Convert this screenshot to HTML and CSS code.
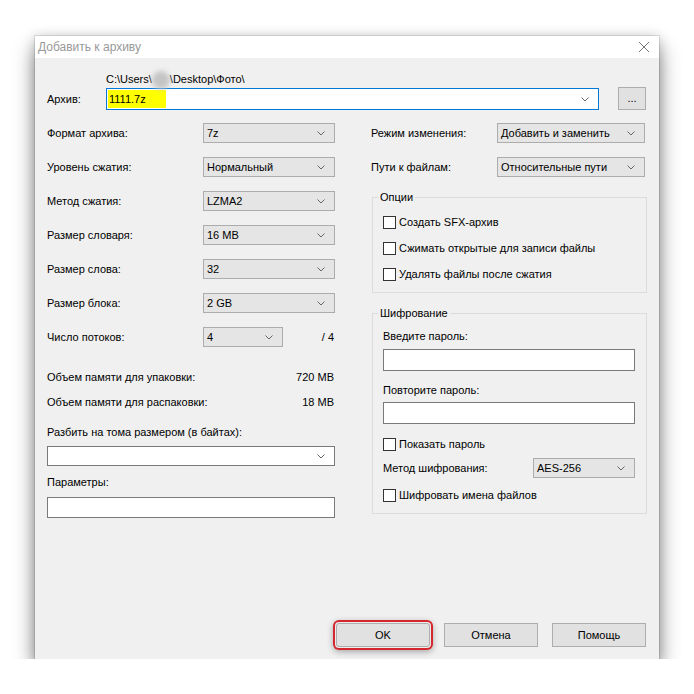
FILE: index.html
```html
<!DOCTYPE html>
<html lang="ru">
<head>
<meta charset="utf-8">
<title>Добавить к архиву</title>
<link rel="stylesheet" href="styles.css">
</head>
<body>
<div class="dialog">
  <div class="titlebar">
    <span class="title">Добавить к архиву</span>
    <svg class="close" width="12" height="12" viewBox="0 0 12 12"><path d="M1 1 L11 11 M11 1 L1 11" stroke="#777" stroke-width="1" fill="none"/></svg>
  </div>
  <div class="body">
    <div class="archive-row">
      <span class="archive-lbl">Архив:</span>
      <div class="archive-main">
        <div class="path">C:\Users\<span class="blur"></span>\Desktop\Фото\</div>
        <div class="combo white focus"><span class="hl">1111.7z</span><svg class="chev" width="8" height="5" viewBox="0 0 8 5"><path d="M0.5 0.5 L4 4 L7.5 0.5" stroke="#666" fill="none"/></svg></div>
      </div>
      <div class="btn browse">...</div>
    </div>

    <div class="columns">
      <div class="left">
        <div class="field-grid">
          <span>Формат архива:</span>
          <div class="combo"><span>7z</span><svg class="chev" width="8" height="5" viewBox="0 0 8 5"><path d="M0.5 0.5 L4 4 L7.5 0.5" stroke="#666" fill="none"/></svg></div>
          <span>Уровень сжатия:</span>
          <div class="combo"><span>Нормальный</span><svg class="chev" width="8" height="5" viewBox="0 0 8 5"><path d="M0.5 0.5 L4 4 L7.5 0.5" stroke="#666" fill="none"/></svg></div>
          <span>Метод сжатия:</span>
          <div class="combo"><span>LZMA2</span><svg class="chev" width="8" height="5" viewBox="0 0 8 5"><path d="M0.5 0.5 L4 4 L7.5 0.5" stroke="#666" fill="none"/></svg></div>
          <span>Размер словаря:</span>
          <div class="combo"><span>16 MB</span><svg class="chev" width="8" height="5" viewBox="0 0 8 5"><path d="M0.5 0.5 L4 4 L7.5 0.5" stroke="#666" fill="none"/></svg></div>
          <span>Размер слова:</span>
          <div class="combo"><span>32</span><svg class="chev" width="8" height="5" viewBox="0 0 8 5"><path d="M0.5 0.5 L4 4 L7.5 0.5" stroke="#666" fill="none"/></svg></div>
          <span>Размер блока:</span>
          <div class="combo"><span>2 GB</span><svg class="chev" width="8" height="5" viewBox="0 0 8 5"><path d="M0.5 0.5 L4 4 L7.5 0.5" stroke="#666" fill="none"/></svg></div>
          <span>Число потоков:</span>
          <div class="threads">
            <div class="combo short"><span>4</span><svg class="chev" width="8" height="5" viewBox="0 0 8 5"><path d="M0.5 0.5 L4 4 L7.5 0.5" stroke="#666" fill="none"/></svg></div>
            <span>/ 4</span>
          </div>
        </div>

        <div class="mem">
          <div class="mem-row"><span>Объем памяти для упаковки:</span><span>720 MB</span></div>
          <div class="mem-row"><span>Объем памяти для распаковки:</span><span>18 MB</span></div>
        </div>

        <div class="split-lbl">Разбить на тома размером (в байтах):</div>
        <div class="combo white split"><span></span><svg class="chev" width="8" height="5" viewBox="0 0 8 5"><path d="M0.5 0.5 L4 4 L7.5 0.5" stroke="#666" fill="none"/></svg></div>
        <div class="params-lbl">Параметры:</div>
        <div class="textbox params"></div>
      </div>

      <div class="right">
        <div class="mode-grid">
          <span>Режим изменения:</span>
          <div class="combo"><span>Добавить и заменить</span><svg class="chev" width="8" height="5" viewBox="0 0 8 5"><path d="M0.5 0.5 L4 4 L7.5 0.5" stroke="#666" fill="none"/></svg></div>
          <span>Пути к файлам:</span>
          <div class="combo"><span>Относительные пути</span><svg class="chev" width="8" height="5" viewBox="0 0 8 5"><path d="M0.5 0.5 L4 4 L7.5 0.5" stroke="#666" fill="none"/></svg></div>
        </div>

        <fieldset class="group options">
          <legend>Опции</legend>
          <div class="check"><span class="cb"></span>Создать SFX-архив</div>
          <div class="check"><span class="cb"></span>Сжимать открытые для записи файлы</div>
          <div class="check"><span class="cb"></span>Удалять файлы после сжатия</div>
        </fieldset>

        <fieldset class="group enc">
          <legend>Шифрование</legend>
          <div class="enc-lbl first">Введите пароль:</div>
          <div class="textbox pwd first-pwd"></div>
          <div class="enc-lbl second">Повторите пароль:</div>
          <div class="textbox pwd second-pwd"></div>
          <div class="check show-pwd"><span class="cb"></span>Показать пароль</div>
          <div class="method-row">
            <span>Метод шифрования:</span>
            <div class="combo method"><span>AES-256</span><svg class="chev" width="8" height="5" viewBox="0 0 8 5"><path d="M0.5 0.5 L4 4 L7.5 0.5" stroke="#666" fill="none"/></svg></div>
          </div>
          <div class="check names"><span class="cb"></span>Шифровать имена файлов</div>
        </fieldset>
      </div>
    </div>

    <div class="buttons">
      <div class="btn ok">OK</div>
      <div class="btn">Отмена</div>
      <div class="btn">Помощь</div>
    </div>
  </div>
</div>
</body>
</html>
```

FILE: styles.css
```css
* { box-sizing: border-box; }
html, body { margin: 0; background: #fff; }
body {
  padding: 36px 0 0 35px;
  font-family: "Liberation Sans", Arial, sans-serif;
  font-size: 11px;
  line-height: 14px;
  color: #000;
}
.dialog {
  width: 624px;
  height: 623px;
  display: flex;
  flex-direction: column;
  background: #f0f0f0;
  box-shadow: 0 0 0 1px rgba(0,0,0,0.1), 0 12px 20px rgba(0,0,0,0.45), 0 2px 12px rgba(0,0,0,0.2);
}
.titlebar {
  height: 22px;
  background: #fff;
  display: flex;
  align-items: center;
  justify-content: space-between;
  padding: 0 9px 0 3px;
}
.title { color: #999; font-size: 12px; }
.body {
  flex: 1;
  display: flex;
  flex-direction: column;
  padding: 13px 12px 12px 12px;
}
.archive-row { display: flex; align-items: flex-end; }
.archive-lbl { width: 59px; height: 22px; line-height: 22px; }
.archive-main { width: 493px; }
.path { height: 14px; margin-bottom: 3px; white-space: nowrap; }
.blur {
  display: inline-block;
  width: 18px;
  height: 18px;
  vertical-align: -6px;
  border-radius: 50%;
  background: #c4c4c4;
  filter: blur(2.5px);
}
.combo {
  display: flex;
  align-items: center;
  justify-content: space-between;
  height: 20px;
  padding: 0 9px 0 3px;
  background: #e5e5e5;
  border: 1px solid #acacac;
  white-space: nowrap;
}
.combo.white { background: #fff; border-color: #7a7a7a; }
.combo.focus { height: 22px; border-color: #0078d7; padding-left: 1px; }
.hl { background: #ffff00; padding: 1px 2px 1px 1px; width: 58px; height: 18px; line-height: 16px; }
.chev { flex: none; }
.btn {
  display: flex;
  align-items: center;
  justify-content: center;
  background: #e1e1e1;
  border: 1px solid #adadad;
}
.browse { margin-left: 19px; width: 28px; height: 23px; align-items: flex-end; padding-bottom: 4px; }

.columns {
  margin-top: 13px;
  display: grid;
  grid-template-columns: 288px 276px;
  column-gap: 36px;
}
.field-grid {
  display: grid;
  grid-template-columns: 156px 132px;
  grid-auto-rows: 20px;
  row-gap: 14px;
  align-items: center;
}
.threads { display: flex; justify-content: space-between; align-items: center; padding-right: 1px; }
.combo.short { width: 80px; }
.mem { margin-top: 23px; display: flex; flex-direction: column; gap: 11px; }
.mem-row { display: flex; justify-content: space-between; padding-right: 1px; }
.split-lbl { margin-top: 16px; }
.split { margin-top: 7px; }
.params-lbl { margin-top: 9px; }
.textbox { background: #fff; border: 1px solid #7a7a7a; }
.params { margin-top: 8px; height: 21px; }

.mode-grid {
  display: grid;
  grid-template-columns: 126px 148px;
  grid-auto-rows: 20px;
  row-gap: 14px;
  align-items: center;
}
.group {
  border: 1px solid #dcdcdc;
  margin: 13px 0 0 1px;
  padding: 10px 11px 10px 10px;
  min-width: 0;
}
.group legend { padding: 0 2px; margin-left: -5px; line-height: 14px; }
.options { display: flex; flex-direction: column; gap: 10px; }
.check { display: flex; align-items: center; height: 16px; }
.cb {
  width: 13px;
  height: 13px;
  border: 1px solid #333;
  background: #fff;
  margin-right: 3px;
  flex: none;
}
.enc { padding-top: 9px; }
.pwd { height: 22px; }
.first-pwd { margin-top: 6px; }
.enc-lbl.second { margin-top: 12px; }
.second-pwd { margin-top: 5px; }
.show-pwd { margin-top: 12px; }
.method-row { margin-top: 6px; display: flex; justify-content: space-between; align-items: center; }
.combo.method { width: 102px; }
.names { margin-top: 9px; }

.buttons {
  margin-top: auto;
  display: flex;
  justify-content: flex-end;
  gap: 14px;
  padding-right: 1px;
}
.buttons .btn { width: 94px; height: 24px; }
.buttons .ok {
  border-radius: 3px;
  box-shadow: 0 0 0 1px #ececec, 0 0 0 3px #d5262d, 0 2px 6px 3px rgba(0,0,0,0.3);
}
```
